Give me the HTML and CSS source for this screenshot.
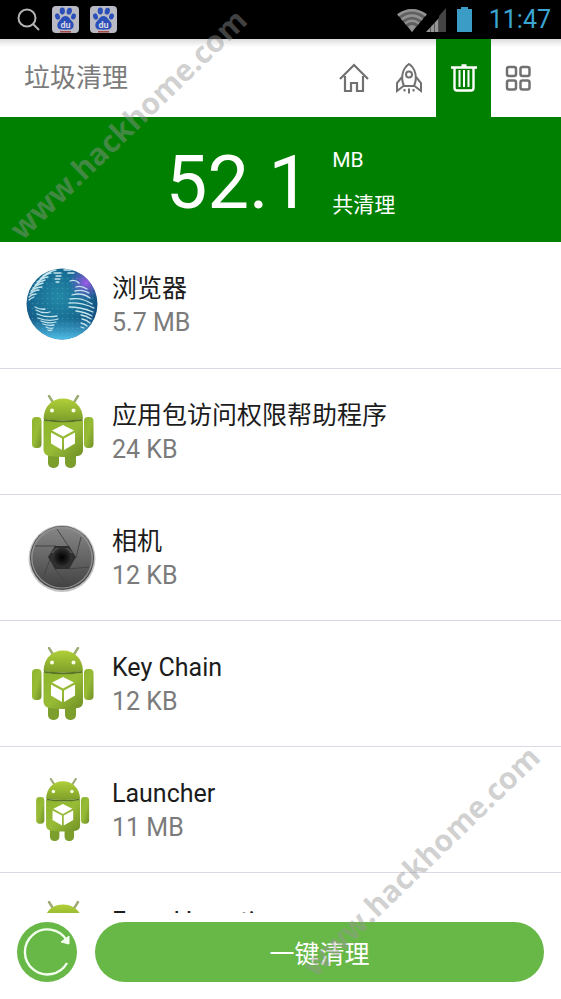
FILE: index.html
```html
<!DOCTYPE html>
<html lang="zh-CN">
<head>
  <meta charset="UTF-8">
  <meta name="viewport" content="width=device-width, initial-scale=1.0">
  <title>垃圾清理</title>
  <link rel="stylesheet" href="styles.css">
</head>
<body>

  <!-- shared icons -->
  <svg class="defs" width="0" height="0" aria-hidden="true">
    <defs>
      <linearGradient id="droidGreen" x1="0" y1="0" x2="0" y2="1">
        <stop offset="0" stop-color="#b0cf38"/>
        <stop offset="1" stop-color="#7d9f2a"/>
      </linearGradient>
      <linearGradient id="droidBody" x1="0" y1="0" x2="1" y2="1">
        <stop offset="0" stop-color="#8db52c"/>
        <stop offset="0.5" stop-color="#98bb36"/>
        <stop offset="1" stop-color="#6f8f26"/>
      </linearGradient>
      <radialGradient id="globeBlue" cx="0.45" cy="0.4" r="0.62">
        <stop offset="0" stop-color="#2389a8"/>
        <stop offset="0.6" stop-color="#176b92"/>
        <stop offset="1" stop-color="#154a7c"/>
      </radialGradient>
      <linearGradient id="globeShine" x1="0" y1="0" x2="0" y2="1">
        <stop offset="0.7" stop-color="#4fc0e8" stop-opacity="0"/>
        <stop offset="1" stop-color="#4fc0e8"/>
      </linearGradient>
      <radialGradient id="globePurple" cx="0.84" cy="0.2" r="0.25">
        <stop offset="0" stop-color="#a05be8"/>
        <stop offset="1" stop-color="#6a5bd0" stop-opacity="0"/>
      </radialGradient>
      <linearGradient id="lensGray" x1="0" y1="0" x2="0" y2="1">
        <stop offset="0" stop-color="#858585"/>
        <stop offset="1" stop-color="#434343"/>
      </linearGradient>
      <radialGradient id="lensHole">
        <stop offset="0" stop-color="#000"/>
        <stop offset="0.6" stop-color="#1c1c1c"/>
        <stop offset="1" stop-color="#363636"/>
      </radialGradient>
      <pattern id="dots" width="5" height="5" patternUnits="userSpaceOnUse">
        <circle cx="1.5" cy="1.5" r="0.8" fill="#5cb4cc" fill-opacity="0.4"/>
      </pattern>
    </defs>

    <symbol id="droid" viewBox="0 0 72 74">
      <path d="M23 1l5 8M52 1l-5 8" stroke="#9bab72" stroke-width="2.4" stroke-linecap="round"/>
      <rect x="22" y="54" width="11" height="19" rx="5" fill="#7b9e2c"/>
      <rect x="39" y="54" width="11" height="19" rx="5" fill="#7b9e2c"/>
      <rect x="6" y="22" width="9.500" height="31" rx="4" fill="url(#droidBody)"/>
      <rect x="58" y="22" width="9.500" height="31" rx="4" fill="url(#droidBody)"/>
      <path d="M17.500 24C18 11 26 3.500 37 3.500S56.500 11 57 24q-19.500 3-39.500 0z" fill="url(#droidGreen)"/>
      <path d="M17.500 25.500q20 3 39.500 0V55q0 5-5 6-14 2-29 0-5-1-5.500-6z" fill="url(#droidBody)"/>
      <path d="M18 24.800q19 3 38.500 0" fill="none" stroke="#587321" stroke-width="1.800"/>
      <circle cx="26" cy="15.500" r="2" fill="#fbffe8"/>
      <circle cx="47.500" cy="15.500" r="2" fill="#fbffe8"/>
      <path d="M37 30l11 5.500-11 6-11-6zM25 37.500l11 6V55l-11-6.500zM49 37.500l-11 6V55l11-6.500z" fill="#fff"/>
    </symbol>

    <symbol id="paw" viewBox="0 0 27 27">
      <rect width="27" height="27" rx="4" fill="#b9bac4"/>
      <g fill="#2a4fb8">
        <ellipse cx="10.300" cy="5" rx="2.600" ry="3.400"/>
        <ellipse cx="17.300" cy="5.200" rx="2.600" ry="3.400" transform="rotate(12 17.3 5.200)"/>
        <ellipse cx="5.500" cy="10.500" rx="2.400" ry="3.200" transform="rotate(-15 5.500 10.500)"/>
        <ellipse cx="21.500" cy="10.500" rx="2.400" ry="3" transform="rotate(15 21.500 10.500)"/>
        <path d="M13.500 10c3.500 0 4 3 6.500 5.200 2.500 2.300 2.500 8-2.500 8.300-3 .2-5 .2-8 0-5-.3-5-6-2.500-8.300C9.500 13 10 10 13.500 10z"/>
      </g>
      <path d="M8 25.800h11" stroke="#a3433f" stroke-width="1.500"/>
      <text class="paw-text" x="13.500" y="21.500" text-anchor="middle">du</text>
    </symbol>
  </svg>

  <div class="status-bar">
    <svg class="status-search" width="24" height="24" viewBox="0 0 24 24" fill="none" stroke="#b4b4b4" stroke-width="2">
      <circle cx="10" cy="10" r="8.500"/>
      <path d="M16 16l6 6"/>
    </svg>
    <svg class="status-app" width="27" height="27"><use href="#paw"/></svg>
    <svg class="status-app" width="27" height="27"><use href="#paw"/></svg>
    <div class="status-right">
      <svg width="52" height="24" viewBox="0 0 52 24">
        <path d="M1 6Q16-4 31 6L16 24z" fill="#606060"/>
        <path d="M2 7.500Q16-3 30 7.500M5.500 11.500Q16 3.500 26.500 11.500M9 15.500Q16 10 23 15.500" fill="none" stroke="#929292" stroke-width="2.400"/>
        <path d="M12 18.500q4-3 8 0L16 24z" fill="#929292"/>
        <path d="M30 24l13-14v14z" fill="#969696"/>
        <path d="M43 24V8l7-8v24z" fill="#444"/>
        <path d="M34.500 19v5M38.500 15v9M42.500 11v13" stroke="#555" stroke-width="1"/>
      </svg>
      <svg width="17" height="25" viewBox="0 0 17 25">
        <path d="M1 2h4V0h7v2h4v23H1z" fill="#3b9dc6"/>
      </svg>
      <span class="clock">11:47</span>
    </div>
  </div>

  <header class="header">
    <h1>垃圾清理</h1>
    <nav class="tabs">
      <button class="tab" type="button" aria-label="主页">
        <svg width="32" height="32" viewBox="0 0 32 32" fill="none" stroke="#717171" stroke-width="2.200">
          <path d="M2 17L16 3l14 14M7 14v15h6v-8h6v8h6V14"/>
        </svg>
      </button>
      <button class="tab" type="button" aria-label="加速">
        <svg width="32" height="32" viewBox="0 0 32 32" fill="none" stroke="#717171" stroke-width="2">
          <path d="M11 24C7 15 10 6 16 2c6 4 9 13 5 22z"/>
          <circle cx="16" cy="12.500" r="3"/>
          <path d="M9 15l-5 6v8l6.500-5M23 15l5 6v8l-6.500-5M16 26.500v5M11.500 27v2.500M20.500 27v2.500"/>
        </svg>
      </button>
      <button class="tab active" type="button" aria-label="清理">
        <svg width="32" height="32" viewBox="0 0 32 32" fill="none" stroke="#fff" stroke-width="2.400">
          <path d="M3 5.500h26M13.500 3.500h5M6.500 6v20q0 2.500 2.500 2.500h14q2.500 0 2.500-2.500V6"/>
          <path d="M11.500 8v17M16 8v17M20.500 8v17" stroke-width="2"/>
        </svg>
      </button>
      <button class="tab" type="button" aria-label="应用">
        <svg width="32" height="32" viewBox="0 0 32 32" fill="none" stroke="#717171" stroke-width="2.500">
          <rect x="4" y="5" width="9" height="9" rx="2"/>
          <rect x="17.500" y="5" width="9" height="9" rx="2"/>
          <rect x="4" y="18.500" width="9" height="9" rx="2"/>
          <rect x="17.500" y="18.500" width="9" height="9" rx="2"/>
        </svg>
      </button>
    </nav>
  </header>

  <section class="summary">
    <div class="amount">52.1</div>
    <div class="unit">
      <span>MB</span>
      <span>共清理</span>
    </div>
  </section>

  <ul class="list">
    <li class="item">
      <svg class="icon" viewBox="0 2 72 72">
        <circle cx="36" cy="37" r="35.500" fill="url(#globeBlue)"/>
        <circle cx="36" cy="37" r="34" fill="url(#dots)"/>
        <circle cx="36" cy="37" r="35.500" fill="url(#globeShine)"/>
        <circle cx="36" cy="37" r="35.500" fill="url(#globePurple)"/>
        <g fill="none" stroke="#c3e4ec" stroke-width="1.300" stroke-linecap="round">
          <path d="M17 9q7-5 13-6M14 12q6-5 11-6M11 15q7-5 11-5M9 18q5-4 10-5M7 21q5-4 10-5M5 24q5-4 11-4M4 27q4-4 9-4M3 30q3-3 7-3M3 33q2-2 5-3"/>
          <path d="M28 6h7M30 9h5M29 12h5M30 15h3M38 3h7M42 6h6"/>
          <path d="M9 40q6 3 10 2M10 43q7 4 14 2M11 47q9 4 20 2M12 51q10 4 20 1M15 54q8 3 15 1M17 57q6 2 11 1M20 60q4 2 7 1M22 63q2 1 4 0"/>
          <path d="M44 14q5-2 9 2M50 20q5-2 11 2M49 24q8-2 14 2M46 28q10-3 18 3M44 32q12-2 22 5M43 36q12-1 25 5M43 40q12 0 24 5M50 44q9 1 16 5M55 48q6 1 10 4M56 52q5 1 8 4M55 56q4 1 6 3M55 60l3 1"/>
        </g>
      </svg>
      <div class="info">
        <div class="name">浏览器</div>
        <div class="size">5.7 MB</div>
      </div>
    </li>
    <li class="item">
      <svg class="icon"><use href="#droid"/></svg>
      <div class="info">
        <div class="name">应用包访问权限帮助程序</div>
        <div class="size">24 KB</div>
      </div>
    </li>
    <li class="item">
      <svg class="icon" viewBox="0 0 72 72">
        <circle cx="36" cy="36.500" r="33.500" fill="#c4c4c4"/>
        <circle cx="36" cy="36" r="32" fill="#4a4a4a"/>
        <circle cx="36" cy="35.500" r="31" fill="#8e8e8e"/>
        <circle cx="36" cy="36" r="29.500" fill="url(#lensGray)"/>
        <path d="M31 7l12 18M9 24h21M18 53l7-18M43 65L29 47M63 45l-20 2M55 15l-5 21" fill="none" stroke="#454545" stroke-width="1"/>
        <path d="M29 24h14l7 11-7 12H29l-7-12z" fill="#2e2e2e"/>
        <path d="M30 26h12l5 5H25z" fill="#575757"/>
        <circle cx="36" cy="35.500" r="10" fill="url(#lensHole)"/>
      </svg>
      <div class="info">
        <div class="name">相机</div>
        <div class="size">12 KB</div>
      </div>
    </li>
    <li class="item">
      <svg class="icon"><use href="#droid"/></svg>
      <div class="info">
        <div class="name">Key Chain</div>
        <div class="size">12 KB</div>
      </div>
    </li>
    <li class="item">
      <svg class="icon small"><use href="#droid"/></svg>
      <div class="info">
        <div class="name">Launcher</div>
        <div class="size">11 MB</div>
      </div>
    </li>
    <li class="item">
      <svg class="icon"><use href="#droid"/></svg>
      <div class="info">
        <div class="name">Fused Location</div>
      </div>
    </li>
  </ul>

  <footer class="actions">
    <button class="refresh" type="button" aria-label="刷新">
      <svg width="60" height="60" viewBox="0 0 60 60" fill="none" stroke="#f4fff0" stroke-width="2.400">
        <path d="M50 41A22.500 22.500 0 1 1 49.500 18"/>
        <path d="M44 20l8 2V14z" fill="#f4fff0" stroke-width="1"/>
      </svg>
    </button>
    <button class="clean" type="button">一键清理</button>
  </footer>

  <div class="watermark top">www.hackhome.com</div>
  <div class="watermark bottom">www.hackhome.com</div>

</body>
</html>
```
FILE: styles.css
```css
* {
  box-sizing: border-box;
}
body {
  margin: 0;
  height: 100vh;
  display: flex;
  flex-direction: column;
  position: relative;
  overflow: hidden;
  background: #fff;
  font-family: Roboto, "Noto Sans CJK SC", sans-serif;
}
button {
  border: none;
  padding: 0;
  font-family: inherit;
  cursor: pointer;
}
.defs {
  position: absolute;
}
.status-bar {
  flex: none;
  display: flex;
  align-items: center;
  gap: 11px;
  height: 39px;
  padding: 0 10px 0 17px;
  background: #000;
}
.paw-text {
  fill: #d8d8e4;
  font-size: 9px;
  font-weight: bold;
}
.status-right {
  display: flex;
  align-items: center;
  gap: 8px;
  margin-left: auto;
}
.clock {
  margin-left: 8px;
  color: #3ba6d2;
  font-size: 25px;
  font-weight: 400;
}
.header {
  flex: none;
  display: flex;
  align-items: center;
  justify-content: space-between;
  height: 78px;
  padding: 0 15px 0 24px;
  background: linear-gradient(#dcdcdc, #fff 8px);
}
.header h1 {
  margin: 0;
  color: #7b7b7b;
  font-size: 26px;
  font-weight: 400;
  line-height: 38px;
}
.tabs {
  display: flex;
  align-self: stretch;
}
.tab {
  display: flex;
  align-items: center;
  justify-content: center;
  width: 55px;
  background: none;
}
.tab.active {
  background: #008001;
}
.summary {
  flex: none;
  display: flex;
  align-items: center;
  justify-content: center;
  gap: 22px;
  height: 125px;
  padding-top: 6px;
  background: #008001;
  color: #fff;
}
.amount {
  font-size: 74px;
  line-height: 90px;
}
.unit {
  display: flex;
  flex-direction: column;
  font-size: 21px;
  line-height: 45px;
}
.list {
  flex: 1;
  min-height: 0;
  margin: 0;
  padding: 0;
  overflow: hidden;
  list-style: none;
}
.item {
  display: flex;
  align-items: center;
  gap: 14px;
  height: 126px;
  padding: 0 26px;
  border-bottom: 1px solid #dadae6;
}
.item:first-child {
  height: 127px;
}
.item:last-child {
  height: 130px;
}
.icon {
  flex: none;
  width: 72px;
  height: 74px;
}
.icon.small {
  width: 62px;
  height: 64px;
  margin: 0 5px;
}
.info {
  min-height: 70px;
  padding-top: 2px;
}
.name,
.size {
  font-size: 25px;
  line-height: 34px;
}
.name {
  color: #1c1c1c;
}
.size {
  color: #7b7b7b;
}
.actions {
  flex: none;
  display: flex;
  align-items: center;
  gap: 18px;
  height: 86px;
  padding: 0 17px 8px;
}
.refresh {
  width: 60px;
  height: 60px;
  border-radius: 50%;
  background: #68b848;
}
.clean {
  flex: 1;
  height: 60px;
  border-radius: 30px;
  background: #68b848;
  color: #fff;
  font-size: 25px;
}
.watermark {
  position: absolute;
  color: rgba(150, 150, 150, 0.45);
  font-family: "Open Sans", sans-serif;
  font-size: 30px;
  font-weight: 700;
  line-height: 40px;
  white-space: nowrap;
  pointer-events: none;
  transform: translate(-50%, -50%) rotate(-44deg);
}
.watermark.top {
  left: 128px;
  top: 124px;
}
.watermark.bottom {
  left: 421px;
  top: 861px;
}
```
